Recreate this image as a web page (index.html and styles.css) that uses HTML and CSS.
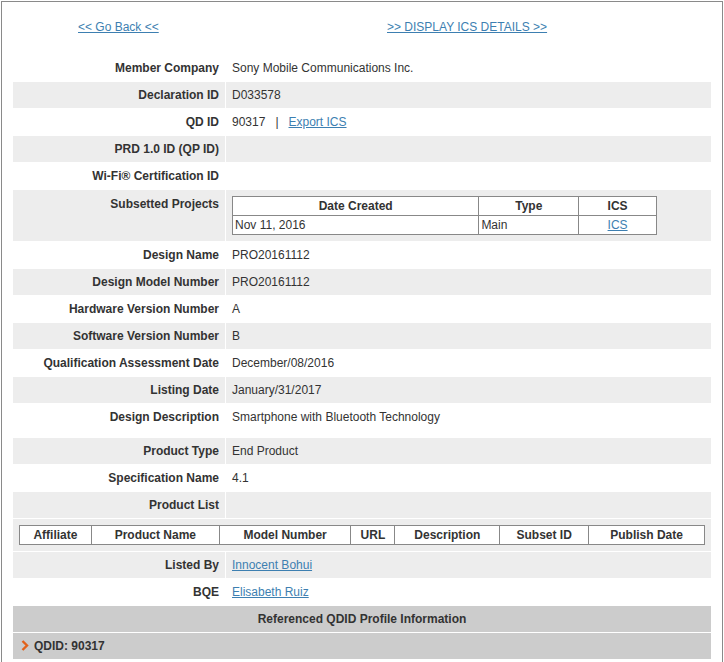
FILE: index.html
```html
<!DOCTYPE html>
<html>
<head>
<meta charset="utf-8">
<link rel="stylesheet" href="styles.css">
</head>
<body>
<div class="frame">
  <div class="nav">
    <a href="#" class="nav-link">&lt;&lt; Go Back &lt;&lt;</a>
    <a href="#" class="nav-link">&gt;&gt; DISPLAY ICS DETAILS &gt;&gt;</a>
  </div>
  <table class="details">
    <tr><th>Member Company</th><td>Sony Mobile Communications Inc.</td></tr>
    <tr class="alt"><th>Declaration ID</th><td>D033578</td></tr>
    <tr><th>QD ID</th><td>90317 &nbsp;&nbsp;<span class="pipe">|</span>&nbsp;&nbsp; <a href="#">Export ICS</a></td></tr>
    <tr class="alt"><th>PRD 1.0 ID (QP ID)</th><td></td></tr>
    <tr><th>Wi-Fi® Certification ID</th><td></td></tr>
    <tr class="alt top"><th>Subsetted Projects</th><td class="sub-cell">
      <table class="sub">
        <colgroup><col class="c-date"><col class="c-type"><col class="c-ics"></colgroup>
        <tr><th>Date Created</th><th>Type</th><th>ICS</th></tr>
        <tr><td>Nov 11, 2016</td><td>Main</td><td class="center"><a href="#">ICS</a></td></tr>
      </table>
    </td></tr>
    <tr><th>Design Name</th><td>PRO20161112</td></tr>
    <tr class="alt"><th>Design Model Number</th><td>PRO20161112</td></tr>
    <tr><th>Hardware Version Number</th><td>A</td></tr>
    <tr class="alt"><th>Software Version Number</th><td>B</td></tr>
    <tr><th>Qualification Assessment Date</th><td>December/08/2016</td></tr>
    <tr class="alt"><th>Listing Date</th><td>January/31/2017</td></tr>
    <tr class="tall"><th>Design Description</th><td>Smartphone with Bluetooth Technology</td></tr>
    <tr class="alt"><th>Product Type</th><td>End Product</td></tr>
    <tr><th>Specification Name</th><td>4.1</td></tr>
    <tr class="alt"><th>Product List</th><td></td></tr>
    <tr class="alt"><td colspan="2" class="prod-cell">
      <table class="prod">
        <colgroup><col class="p1"><col class="p2"><col class="p3"><col class="p4"><col class="p5"><col class="p6"><col class="p7"></colgroup>
        <tr><th>Affiliate</th><th>Product Name</th><th>Model Number</th><th>URL</th><th>Description</th><th>Subset ID</th><th>Publish Date</th></tr>
      </table>
    </td></tr>
    <tr class="alt"><th>Listed By</th><td><a href="#">Innocent Bohui</a></td></tr>
    <tr><th>BQE</th><td><a href="#">Elisabeth Ruiz</a></td></tr>
    <tr class="head"><th colspan="2" class="center">Referenced QDID Profile Information</th></tr>
    <tr class="head"><th colspan="2" class="qdid"><span class="chev"><svg width="8" height="11" viewBox="0 0 8 11"><path d="M1.5 1 L6 5.5 L1.5 10" fill="none" stroke="#e2621b" stroke-width="2.4"/></svg></span>QDID: 90317</th></tr>
  </table>
</div>
</body>
</html>
```
FILE: styles.css
```css
html, body {
  margin: 0;
  padding: 0;
  background: #fff;
}
body {
  font-family: "Liberation Sans", Arial, sans-serif;
  font-size: 12px;
  color: #333;
}
.frame {
  margin: 1px 0 0 1px;
  height: 700px;
  border: 1px solid #8a8a8a;
  border-bottom: none;
  padding: 0 9px 0 10px;
  box-sizing: border-box;
  width: 722px;
}
a {
  color: #3d7fb1;
  text-decoration: underline;
}
.pipe {
  color: #333;
}
.nav {
  display: grid;
  grid-template-columns: 309px auto;
  padding: 18px 0 0 66px;
  line-height: 15px;
  height: 33px;
  box-sizing: border-box;
}
.details {
  margin-top: 19px;
  width: 700px;
  border-spacing: 1px;
  border-collapse: separate;
}
.details > tbody > tr > th,
.details > tbody > tr > td {
  height: 26px;
  padding: 0 5px 0 6px;
  vertical-align: middle;
  text-align: left;
  font-weight: normal;
}
.details > tbody > tr > th {
  width: 200px;
  text-align: right;
  font-weight: bold;
  padding-right: 6px;
}
.details > tbody > tr.alt > th,
.details > tbody > tr.alt > td {
  background: #ededed;
}
.details > tbody > tr.top > th {
  vertical-align: top;
  padding-top: 7px;
  height: auto;
}
.details > tbody > tr.tall > th,
.details > tbody > tr.tall > td {
  padding-bottom: 7px;
}
.details > tbody > tr.head > th {
  background: #cccccc;
  font-weight: bold;
}
.details > tbody > tr.head > th.center {
  text-align: center;
}
.details > tbody > tr.head > th.qdid {
  text-align: left;
  padding-left: 8px;
}
.chev {
  display: inline-block;
  width: 13px;
  vertical-align: -1px;
}
.details > tbody > tr > td.sub-cell {
  height: auto;
  padding: 6px 5px 6px 6px;
}
.sub {
  width: 425px;
  border-collapse: collapse;
  border: 1px solid #222;
  background: #fff;
}
.c-date { width: 247px; }
.c-type { width: 100px; }
.c-ics { width: 78px; }
.sub th, .sub td {
  border: 1px solid #888;
  height: 18px;
  padding: 0 2px;
  text-align: left;
  font-weight: normal;
}
.sub th {
  font-weight: bold;
  text-align: center;
}
.sub td.center { text-align: center; }
.details > tbody > tr > td.prod-cell {
  height: auto;
  padding: 6px 6px 6px 6px;
}
.prod {
  width: 686px;
  border-collapse: collapse;
  border: 1px solid #222;
  background: #fff;
}
.prod th {
  border: 1px solid #888;
  height: 18px;
  padding: 0;
  text-align: center;
  font-weight: bold;
}
.p1 { width: 72px; }
.p2 { width: 128px; }
.p3 { width: 132px; }
.p4 { width: 44px; }
.p5 { width: 105px; }
.p6 { width: 89px; }
.p7 { width: 116px; }
```
